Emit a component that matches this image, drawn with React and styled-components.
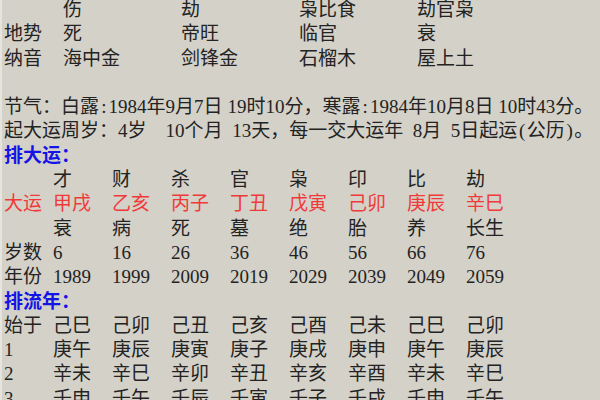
import React from "react";
import styled, { createGlobalStyle } from "styled-components";

const GlobalStyle = createGlobalStyle`
  html, body {
    margin: 0;
    padding: 0;
    background: #d4d1c8;
    overflow: hidden;
  }
`;

const Panel = styled.div`
  width: 600px;
  height: 400px;
  overflow: hidden;
  box-sizing: border-box;
  border-left: 2px solid #e6e4de;
  background: #d4d1c8;
  font-family: "Liberation Serif", "Noto Sans CJK SC", serif;
  font-size: 19px;
  line-height: 24.3px;
  color: #232323;
`;

const Content = styled.div`
  margin-top: -2px;
  padding-left: 2px;
`;

const PillarGrid = styled.div`
  display: grid;
  grid-template-columns: 59px repeat(4, 118px);
  margin-bottom: 24.3px;
`;

const LuckGrid = styled.div`
  display: grid;
  grid-template-columns: 49px repeat(8, 59px);
  color: ${(p) => (p.$red ? "#f03a3a" : "inherit")};
`;

const Cell = styled.div`
  white-space: nowrap;
`;

const Line = styled.div`
  white-space: pre;
`;

// half-width cell, like the ASCII punctuation of the original bitmap font
const Half = styled.span`
  display: inline-block;
  width: 0.5em;
  text-align: center;
`;

const Heading = styled.div`
  color: #1414e6;
  font-weight: bold;
  white-space: nowrap;
`;

const pillars = [
  ["", "伤", "劫", "枭比食", "劫官枭"],
  ["地势", "死", "帝旺", "临官", "衰"],
  ["纳音", "海中金", "剑锋金", "石榴木", "屋上土"],
];

const luck = [
  { cells: ["", "才", "财", "杀", "官", "枭", "印", "比", "劫"] },
  { cells: ["大运", "甲戌", "乙亥", "丙子", "丁丑", "戊寅", "己卯", "庚辰", "辛巳"], red: true },
  { cells: ["", "衰", "病", "死", "墓", "绝", "胎", "养", "长生"] },
  { cells: ["岁数", "6", "16", "26", "36", "46", "56", "66", "76"] },
  { cells: ["年份", "1989", "1999", "2009", "2019", "2029", "2039", "2049", "2059"] },
];

const years = [
  ["始于", "己巳", "己卯", "己丑", "己亥", "己酉", "己未", "己巳", "己卯"],
  ["1", "庚午", "庚辰", "庚寅", "庚子", "庚戌", "庚申", "庚午", "庚辰"],
  ["2", "辛未", "辛巳", "辛卯", "辛丑", "辛亥", "辛酉", "辛未", "辛巳"],
  ["3", "壬申", "壬午", "壬辰", "壬寅", "壬子", "壬戌", "壬申", "壬午"],
];

// colon and parens take half an em, as in the original bitmap font
function Mono({ text }) {
  return text.split("").map((ch, i) =>
    ":()".includes(ch) ? <Half key={i}>{ch}</Half> : ch
  );
}

export default function App() {
  return (
    <>
      <GlobalStyle />
      <Panel>
        <Content>
          <PillarGrid>
            {pillars.map((row, i) =>
              row.map((c, j) => <Cell key={`${i}-${j}`}>{c}</Cell>)
            )}
          </PillarGrid>
          <Line>
            <Mono text="节气：白露:1984年9月7日 19时10分，寒露:1984年10月8日 10时43分。" />
          </Line>
          <Line>
            <Mono text={"起大运周岁：4岁\u2002\u200210个月\u200213天，每一交大运年\u20028月\u20025日起运(公历)。"} />
          </Line>
          <Heading>排大运：</Heading>
          {luck.map((row, i) => (
            <LuckGrid key={i} $red={row.red}>
              {row.cells.map((c, j) => (
                <Cell key={j}>{c}</Cell>
              ))}
            </LuckGrid>
          ))}
          <Heading>排流年：</Heading>
          {years.map((row, i) => (
            <LuckGrid key={i}>
              {row.map((c, j) => (
                <Cell key={j}>{c}</Cell>
              ))}
            </LuckGrid>
          ))}
        </Content>
      </Panel>
    </>
  );
}
